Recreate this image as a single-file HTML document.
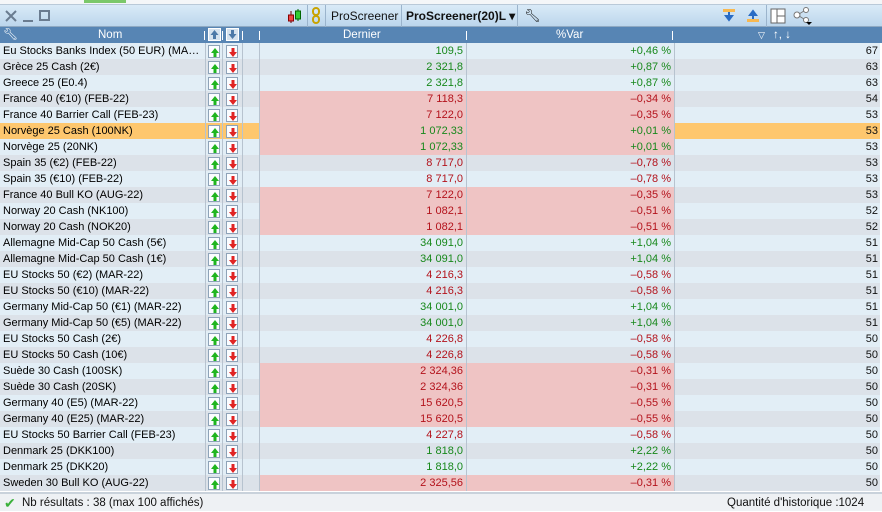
<!DOCTYPE html>
<html><head><meta charset="utf-8"><style>
*{margin:0;padding:0;box-sizing:border-box}
body{width:882px;height:511px;overflow:hidden;background:#fff;font-family:"Liberation Sans",sans-serif;font-size:11px;position:relative}
.top{position:absolute;left:0;top:0;width:882px;height:5px;background:#f4f6f8;border-bottom:1px solid #b9c9d8}
.tb{position:absolute;left:0;top:5px;width:882px;height:22px;background:linear-gradient(#d9eaf7,#bcd6ec);border-bottom:1px solid #8fa9c2}
.tb .t{position:absolute;top:4px;font-size:12px;color:#111}
.sep{position:absolute;top:0;width:1px;height:22px;background:#9bb4cc}
.hd{position:absolute;left:0;top:27px;width:882px;height:16px;background:#5785b4;color:#fff}
.hd span{position:absolute;top:2px;font-size:11.5px}
.hd i{position:absolute;top:4px;width:1px;height:9px;background:#fff}
.row{position:absolute;left:0;width:880px;height:16px}
.row div{position:absolute;top:0;height:16px;line-height:16px;white-space:nowrap}
.n{left:3px}
.d{left:259px;width:207px;text-align:right;padding-right:3px}
.v{left:466px;width:208px;text-align:right;padding-right:3px}
.c{left:674px;width:206px;text-align:right;padding-right:2px;color:#111}
.g{color:#17881b}.r{color:#b3121b}
.pk{background:#efc4c4}
.ic{position:absolute;top:2px;width:12px;height:13px;background:#fbfdff;border:1px solid #8ea3b8}
.vl{position:absolute;top:43px;width:1px;height:448px;background:#b7c3cf}
.ft{position:absolute;left:0;top:492px;width:882px;height:19px;background:#eef1f4;border-top:2px solid #c9d2db}
.ft span{position:absolute;top:3px;font-size:11.5px;color:#111}
</style></head><body>
<div class="top"><div style="position:absolute;left:84px;top:0;width:42px;height:3px;background:#7bc86a"></div></div>
<div class="tb">
<svg style="position:absolute;left:5px;top:5px" width="12" height="12"><path d="M1 1L11 11M11 1L1 11" stroke="#6a7c90" stroke-width="2"/></svg>
<div style="position:absolute;left:23px;top:15px;width:10px;height:2px;background:#6a7c90"></div>
<div style="position:absolute;left:39px;top:5px;width:11px;height:11px;border:2px solid #6a7c90"></div>
<svg style="position:absolute;left:287px;top:3px" width="16" height="16"><line x1="4" y1="3" x2="4" y2="15" stroke="#600"/><rect x="1.5" y="7" width="5" height="6" fill="#e44" stroke="#800"/><line x1="11" y1="1" x2="11" y2="13" stroke="#060"/><rect x="8.5" y="3" width="5" height="8" fill="#3c3" stroke="#060"/></svg>
<div class="sep" style="left:307px"></div>
<svg style="position:absolute;left:311px;top:2px" width="10" height="18"><rect x="2" y="1" width="6" height="7" rx="3" fill="none" stroke="#c9a300" stroke-width="2"/><rect x="2" y="9" width="6" height="7" rx="3" fill="none" stroke="#c9a300" stroke-width="2"/></svg>
<div class="sep" style="left:325px"></div>
<span class="t" style="left:331px">ProScreener</span>
<div class="sep" style="left:401px"></div>
<span class="t" style="left:406px;font-weight:bold">ProScreener(20)L ▾</span>
<div class="sep" style="left:517px"></div>
<span class="t" style="left:524px;top:3px;font-size:13px">🔧︎</span>
<svg style="position:absolute;left:722px;top:3px" width="14" height="15"><rect x="1" y="1" width="12" height="3" fill="#f8b850"/><path d="M7 4v6M4 8l3 4 3-4z" stroke="#2a6cc4" stroke-width="2" fill="#2a6cc4"/></svg>
<svg style="position:absolute;left:746px;top:3px" width="14" height="15"><rect x="1" y="11" width="12" height="3" fill="#f8b850"/><path d="M7 11V5M4 7l3-4 3 4z" stroke="#2a6cc4" stroke-width="2" fill="#2a6cc4"/></svg>
<div class="sep" style="left:766px"></div>
<svg style="position:absolute;left:770px;top:3px" width="16" height="16"><rect x="1" y="1" width="14" height="14" fill="#fff" stroke="#666"/><line x1="7" y1="1" x2="7" y2="15" stroke="#666"/><line x1="7" y1="8" x2="15" y2="8" stroke="#666"/></svg>
<svg style="position:absolute;left:793px;top:2px" width="20" height="18"><circle cx="4" cy="8" r="3" fill="#fff" stroke="#777"/><circle cx="13" cy="3" r="2.5" fill="#fff" stroke="#777"/><circle cx="13" cy="13" r="2.5" fill="#fff" stroke="#777"/><path d="M6 7l5-3M6 9l5 3" stroke="#777"/><path d="M13 15h6l-3 3z" fill="#000"/></svg>
</div>
<div class="hd">
<span style="left:3px;top:0;font-size:12px">🔧︎</span>
<span style="left:98px">Nom</span>
<i style="left:204px"></i>
<div style="position:absolute;left:208px;top:1px;width:13px;height:13px;background:#d6e2ee;border:1px solid #fff"><svg width="11" height="11"><path d="M5.5 1l-4 5h2.5v4h3V6h2.5z" fill="#4d79a8"/></svg></div>
<i style="left:222px"></i>
<div style="position:absolute;left:226px;top:1px;width:13px;height:13px;background:#d6e2ee;border:1px solid #fff"><svg width="11" height="11"><path d="M5.5 10l-4-5h2.5V1h3v4h2.5z" fill="#4d79a8"/></svg></div>
<i style="left:242px"></i><i style="left:259px"></i>
<span style="left:343px">Dernier</span>
<i style="left:466px"></i>
<span style="left:556px">%Var</span>
<i style="left:672px"></i>
<span style="left:758px;font-size:9px;top:3px">▽</span>
<span style="left:773px">↑, ↓</span>
</div>
<div id="rows"></div>
<div class="vl" style="left:205px"></div><div class="vl" style="left:222px"></div><div class="vl" style="left:242px"></div><div class="vl" style="left:259px"></div><div class="vl" style="left:466px"></div><div class="vl" style="left:674px"></div>
<div class="ft">
<span style="left:4px;top:1px;color:#3bb13b;font-size:14px">✔</span>
<span style="left:22px">Nb résultats : 38 (max 100 affichés)</span>
<span style="left:727px">Quantité d'historique :1024</span>
</div>
<script>
var d=[
["Eu Stocks Banks Index (50 EUR) (MA…","109,5","+0,46 %","67",0],
["Grèce 25 Cash (2€)","2 321,8","+0,87 %","63",0],
["Greece 25 (E0.4)","2 321,8","+0,87 %","63",0],
["France 40 (€10) (FEB-22)","7 118,3","–0,34 %","54",1],
["France 40 Barrier Call (FEB-23)","7 122,0","–0,35 %","53",1],
["Norvège 25 Cash (100NK)","1 072,33","+0,01 %","53",1],
["Norvège 25 (20NK)","1 072,33","+0,01 %","53",1],
["Spain 35 (€2) (FEB-22)","8 717,0","–0,78 %","53",0],
["Spain 35 (€10) (FEB-22)","8 717,0","–0,78 %","53",0],
["France 40 Bull KO (AUG-22)","7 122,0","–0,35 %","53",1],
["Norway 20 Cash (NK100)","1 082,1","–0,51 %","52",1],
["Norway 20 Cash (NOK20)","1 082,1","–0,51 %","52",1],
["Allemagne Mid-Cap 50 Cash (5€)","34 091,0","+1,04 %","51",0],
["Allemagne Mid-Cap 50 Cash (1€)","34 091,0","+1,04 %","51",0],
["EU Stocks 50 (€2) (MAR-22)","4 216,3","–0,58 %","51",0],
["EU Stocks 50 (€10) (MAR-22)","4 216,3","–0,58 %","51",0],
["Germany Mid-Cap 50 (€1) (MAR-22)","34 001,0","+1,04 %","51",0],
["Germany Mid-Cap 50 (€5) (MAR-22)","34 001,0","+1,04 %","51",0],
["EU Stocks 50 Cash (2€)","4 226,8","–0,58 %","50",0],
["EU Stocks 50 Cash (10€)","4 226,8","–0,58 %","50",0],
["Suède 30 Cash (100SK)","2 324,36","–0,31 %","50",1],
["Suède 30 Cash (20SK)","2 324,36","–0,31 %","50",1],
["Germany 40 (E5) (MAR-22)","15 620,5","–0,55 %","50",1],
["Germany 40 (E25) (MAR-22)","15 620,5","–0,55 %","50",1],
["EU Stocks 50 Barrier Call (FEB-23)","4 227,8","–0,58 %","50",0],
["Denmark 25 (DKK100)","1 818,0","+2,22 %","50",0],
["Denmark 25 (DKK20)","1 818,0","+2,22 %","50",0],
["Sweden 30 Bull KO (AUG-22)","2 325,56","–0,31 %","50",1]];
var h="";
var up='<svg width="10" height="11" style="position:absolute;left:1px;top:1px"><path d="M5 1L1 6h2.5v4h3V6H9z" fill="#1fb51f"/></svg>';
var dn='<svg width="10" height="11" style="position:absolute;left:1px;top:1px"><path d="M5 10L1 5h2.5V1h3v4H9z" fill="#e02424"/></svg>';
d.forEach(function(r,i){
var bg=i==5?"#fec76e":(i%2?"#dce2e9":"#e2eef6");
var cl=r[2][0]=="+"?"g":"r";
var pk=r[4]?" pk":"";
h+='<div class="row" style="top:'+(43+16*i)+'px;background:'+bg+'">'+
'<div class="n">'+r[0]+'</div>'+
'<span class="ic" style="left:208px">'+up+'</span><span class="ic" style="left:226px">'+dn+'</span>'+
'<div class="d '+cl+pk+'">'+r[1]+'</div><div class="v '+cl+pk+'">'+r[2]+'</div><div class="c">'+r[3]+'</div></div>';
});
document.getElementById("rows").innerHTML=h;
</script>
</body></html>
